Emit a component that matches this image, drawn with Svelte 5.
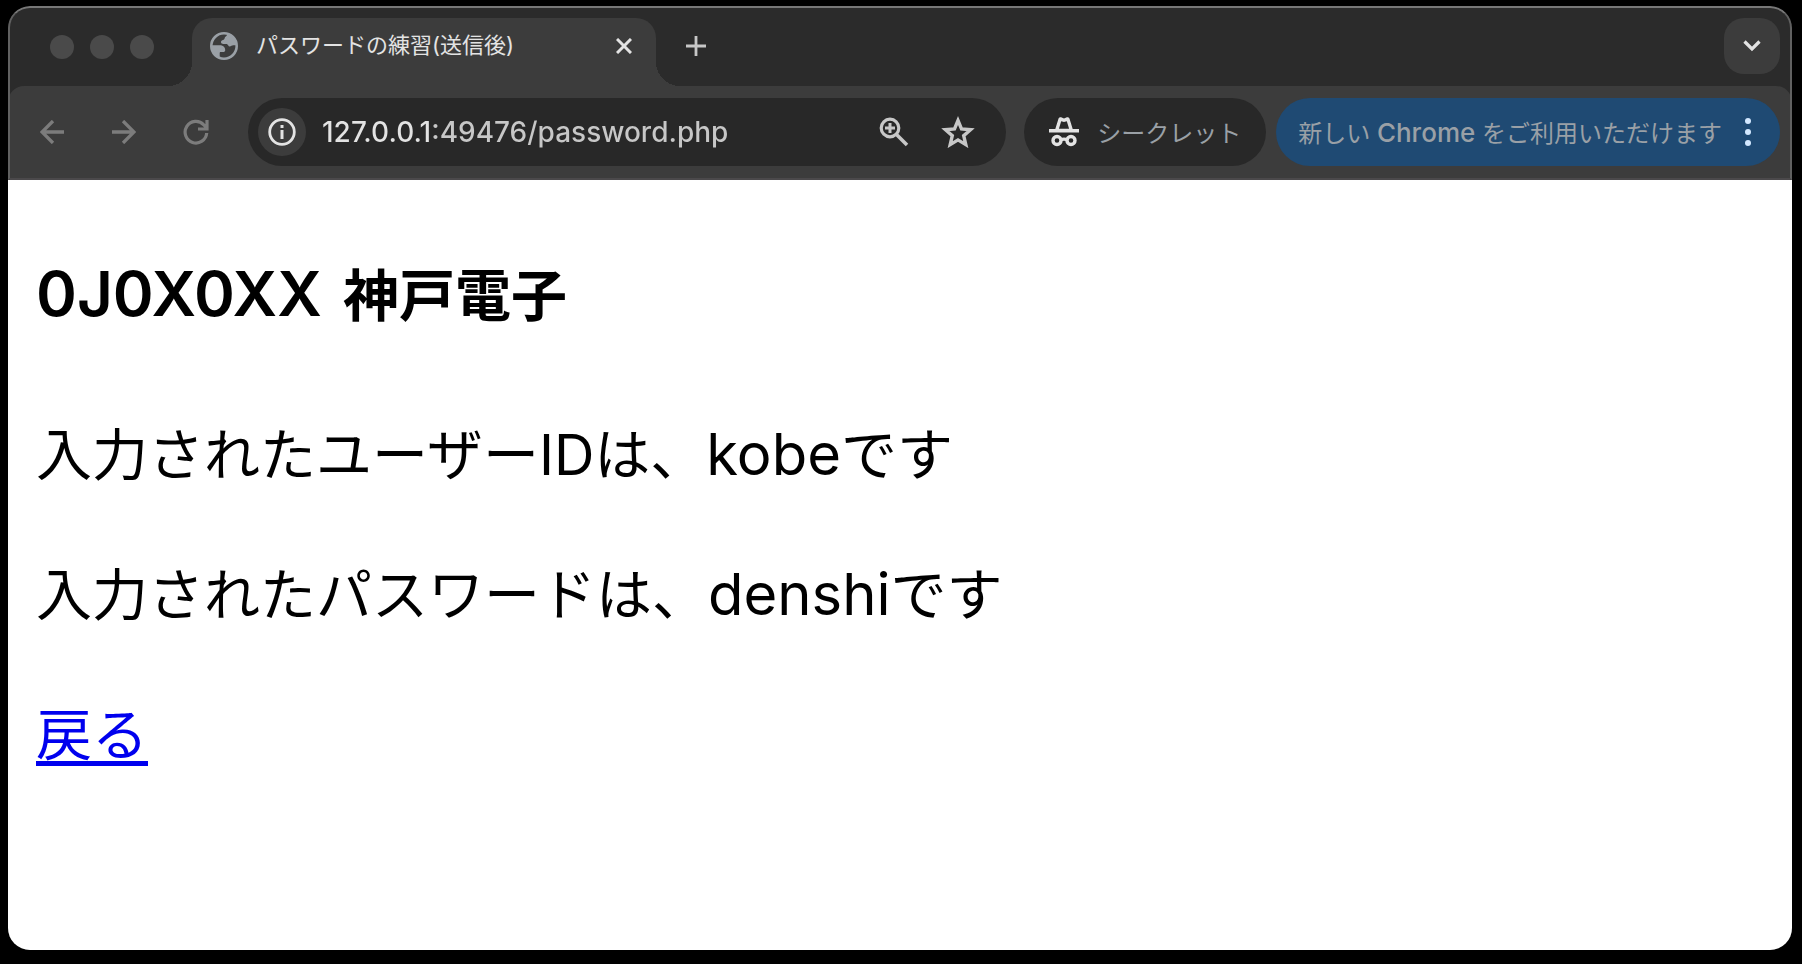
<script>
  let address = $state('127.0.0.1:49476/password.php');
  const results = [
    { label: '入力されたユーザーIDは、', value: 'kobe' },
    { label: '入力されたパスワードは、', value: 'denshi' }
  ];
</script>

<div class="desktop">
  <div class="window">
    <header class="tabs">
      <div class="lights"><i></i><i></i><i></i></div>
      <div class="tab">
        <svg class="globe" width="28" height="28" viewBox="0 0 28 28" aria-hidden="true">
          <circle cx="14" cy="14" r="12.700" fill="none" stroke="#9aa0a6" stroke-width="2.600" />
          <path fill="#9aa0a6" d="M17 1.500c.3 1.500-.3 2.500-1.500 3.200-1 .6-.6 2.300-1.800 3-1 .6-2.700.5-2.700 2.300 0 1.400 1 1.900 2.500 1.900h3.200c1.300 0 1.600 2.600 3 2.600 1.200 0 2.300-1.200 3.500-1.200h3.500C26.500 7 23 2.500 17 1.500zM1.500 13.300H9.500c3.500 0 5.700 1.700 5.700 5 0 1.200-.8 1.800-2 1.800h-2.500c-.7 0-1 .5-1 1.200V26C4 24.500 1 20 1.500 13.300z" />
        </svg>
        <span class="title">パスワードの練習(送信後)</span>
        <button class="icon close" aria-label="タブを閉じる">
          <svg width="16" height="16" viewBox="0 0 16 16"><path d="M1 1l14 14M15 1L1 15" stroke="#e3e3e3" stroke-width="3" /></svg>
        </button>
      </div>
      <button class="icon plus" aria-label="新しいタブ">
        <svg width="20" height="20" viewBox="0 0 20 20"><path d="M10 0v20M0 10h20" stroke="#c7c7c7" stroke-width="2.800" /></svg>
      </button>
      <button class="icon search" aria-label="タブを検索">
        <svg width="18" height="12" viewBox="0 0 18 12"><path d="M1.500 1.500L9 9l7.500-7.500" fill="none" stroke="#e3e3e3" stroke-width="3.200" /></svg>
      </button>
    </header>

    <nav class="toolbar">
      <div class="moves">
        <button class="icon" aria-label="戻る" disabled>
          <svg width="24" height="24" viewBox="0 0 24 24"><path d="M24 12H2M13 1L2 12l11 11" fill="none" stroke="#7c7c7c" stroke-width="3.300" /></svg>
        </button>
        <button class="icon" aria-label="進む" disabled>
          <svg width="24" height="24" viewBox="0 0 24 24"><path d="M0 12h22M11 1l11 11-11 11" fill="none" stroke="#7c7c7c" stroke-width="3.300" /></svg>
        </button>
        <button class="icon" aria-label="再読み込み">
          <svg width="26" height="26" viewBox="0 0 26 26"><path d="M23.700 14A10.800 10.800 0 1 1 20.800 5.800L24 9M24 1v9H15" fill="none" stroke="#7c7c7c" stroke-width="3.200" /></svg>
        </button>
      </div>
      <div class="address">
        <button class="icon info" aria-label="サイト情報">
          <svg width="28" height="28" viewBox="0 0 28 28"><circle cx="14" cy="14" r="12.300" fill="none" stroke="#e3e3e3" stroke-width="2.800" /><path d="M14 12v9M14 7v3" stroke="#e3e3e3" stroke-width="3" /></svg>
        </button>
        <input aria-label="アドレス" bind:value={address} spellcheck="false" />
        <button class="icon" aria-label="ズーム">
          <svg width="30" height="30" viewBox="0 0 30 30"><g fill="none" stroke="#c7c7c7"><circle cx="11" cy="11" r="8.800" stroke-width="3.200" /><path d="M17.500 17.500L28 28" stroke-width="3.600" /><path d="M11 6v10M6 11h10" stroke-width="3" /></g></svg>
        </button>
        <button class="icon" aria-label="ブックマーク">
          <svg width="34" height="32" viewBox="0 0 34 32"><path d="M17 4.500l3.500 8.400 9.100.8-6.900 6 2.100 8.900-7.800-4.700-7.800 4.700 2.100-8.900-6.900-6 9.100-.8z" fill="none" stroke="#c7c7c7" stroke-width="3.400" /></svg>
        </button>
      </div>
      <button class="pill incognito">
        <svg width="30" height="30" viewBox="0 0 30 30" aria-hidden="true">
          <path fill="#e3e3e3" fill-rule="evenodd" d="M6.300 12L9.300 2.200C9.800.6 11.200 0 12.700.6L15 1.600l2.300-1c1.500-.6 2.900 0 3.400 1.600L23.700 12H30v3.500H0V12zM9.900 11.800h10.200L17.800 4.200 15 5l-2.800-.8z" />
          <g fill="none" stroke="#e3e3e3" stroke-width="3.400"><circle cx="8" cy="23.500" r="4" /><circle cx="22" cy="23.500" r="4" /><path d="M11.500 23c2-1 5-1 7 0" /></g>
        </svg>
        <span>シークレット</span>
      </button>
      <button class="pill update">
        <span>新しい <span class="brand">Chrome</span> をご利用いただけます</span>
        <svg width="6" height="28" viewBox="0 0 6 28" aria-hidden="true"><g fill="#d3e8ff"><circle cx="3" cy="3" r="3" /><circle cx="3" cy="14" r="3" /><circle cx="3" cy="25" r="3" /></g></svg>
      </button>
    </nav>

    <main>
      <h1><span class="code">0J0X0XX</span> 神戸電子</h1>
      {#each results as result}
        <p>{result.label}<span class="value">{result.value}</span>です</p>
      {/each}
      <p><a href="#back">戻る</a></p>
    </main>
  </div>
</div>

<style>
  :global(body) { margin: 0; background: #000; }
  * { box-sizing: border-box; }
  .desktop {
    display: flex;
    min-height: 100vh;
    padding: 6px 10px 14px 8px;
    background: #000;
    font-family: Inter, "Noto Sans CJK JP", sans-serif;
  }
  .window {
    position: relative;
    flex: 1;
    display: flex;
    flex-direction: column;
    min-width: 0;
    border-radius: 22px;
    overflow: hidden;
    background: #2b2b2b;
  }
  .window::after {
    content: "";
    box-sizing: border-box;
    position: absolute;
    inset: 0 0 auto;
    height: 174px;
    border: 2px solid #606060;
    border-top-color: #777;
    border-bottom-color: #4b494b;
    border-radius: 22px 22px 0 0;
    pointer-events: none;
  }
  button, input { border: 0; padding: 0; margin: 0; background: none; font: inherit; color: inherit; }
  svg { display: block; flex: none; }
  .icon { display: grid; place-items: center; flex: none; width: 40px; height: 40px; border-radius: 20px; }
  .tabs { display: flex; height: 80px; padding: 12px 12px 0 42px; }
  .lights { display: flex; gap: 16px; padding-top: 17px; width: 142px; }
  .lights i { width: 24px; height: 24px; border-radius: 50%; background: #4a4a4a; }
  .tab {
    position: relative;
    display: flex;
    align-items: center;
    width: 464px;
    padding: 0 12px 12px 18px;
    border-radius: 20px 20px 0 0;
    background: #3c3c3c;
    color: #e3e3e3;
    font-size: 22px;
  }
  .tab::before, .tab::after {
    content: "";
    position: absolute;
    bottom: 0;
    width: 24px;
    height: 24px;
  }
  .tab::before { right: 100%; background: radial-gradient(circle at 0 0, transparent 24px, #3c3c3c 24px); }
  .tab::after { left: 100%; background: radial-gradient(circle at 100% 0, transparent 24px, #3c3c3c 24px); }
  .title { flex: 1; margin-left: 18px; padding-bottom: 2px; line-height: 32px; white-space: nowrap; }
  .plus { margin: 8px 0 0 20px; }
  .search { width: 56px; height: 56px; margin-left: auto; background: #3c3c3c; }
  .toolbar {
    display: flex;
    align-items: center;
    height: 94px;
    padding: 0 12px 2px 24px;
    border-radius: 16px 16px 0 0;
    background: #3c3c3c;
  }
  .moves { display: flex; gap: 32px; width: 216px; }
  .address {
    flex: 1;
    display: flex;
    align-items: center;
    gap: 24px;
    min-width: 0;
    height: 68px;
    padding: 0 28px 0 10px;
    border-radius: 34px;
    background: #282828;
  }
  .info { width: 48px; height: 48px; border-radius: 24px; background: #3c3c3c; }
  .address input {
    flex: 1;
    min-width: 0;
    height: 40px;
    margin-left: -8px;
    outline: 0;
    font-size: 28px;
    font-weight: 500;
    color: transparent;
    caret-color: #e3e3e3;
    background: linear-gradient(90deg, #e3e3e3 112px, #c7c7c7 112px);
    background-clip: text;
  }
  .pill {
    display: flex;
    align-items: center;
    flex: none;
    height: 68px;
    border-radius: 34px;
    color: #9aa0a6;
    font-size: 24px;
    white-space: nowrap;
  }
  .pill > span { padding-bottom: 2px; }
  .brand { font-size: 26px; font-weight: 500; }
  .incognito { gap: 18px; margin-left: 18px; padding: 0 25px; background: #282828; }
  .update { gap: 23px; margin-left: 10px; padding: 0 29px 0 22px; background: #1f4a73; }
  main { flex: 1; padding: 74px 28px 0; background: #fff; color: #000; font-size: 56px; line-height: 84px; }
  h1 { margin: 0 0 75px; font-size: 56px; font-weight: 700; }
  .code { margin-right: 8px; font-size: 62px; font-weight: 600; line-height: 64px; }
  .value { font-size: 58px; line-height: 64px; }
  p { margin: 0 0 56px; }
  a { color: #0000ee; text-decoration-thickness: 5px; text-underline-offset: 6px; text-decoration-skip-ink: none; }
</style>
